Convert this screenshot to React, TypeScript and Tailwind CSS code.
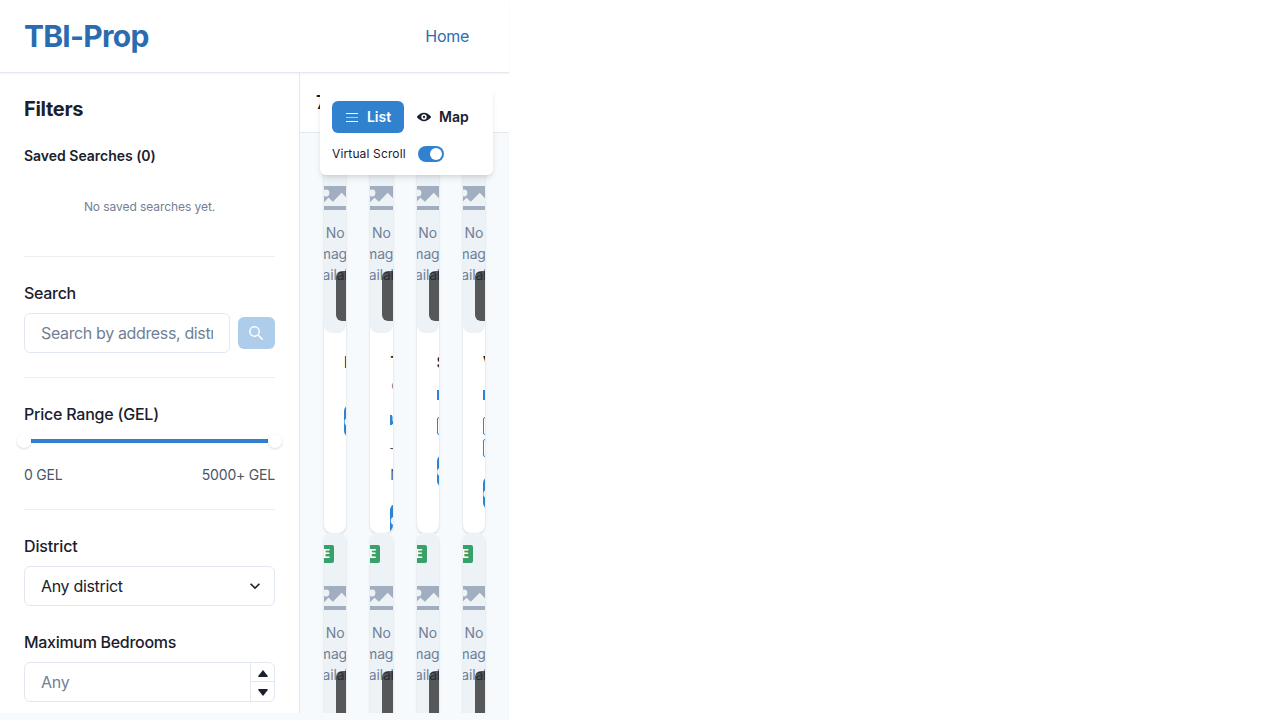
import type { ReactNode } from "react";

type Listing = { title: string; body: ReactNode };

function DetailsButton({ className }: { className: string }) {
  return (
    <button className={`block h-8 w-28 shrink-0 rounded-md bg-[#3182ce] text-left text-sm font-semibold text-white ${className}`}>
      e Details
    </button>
  );
}

function BedIcon({ className }: { className: string }) {
  return (
    <svg className={`block h-2.5 w-3 shrink-0 ${className}`} viewBox="0 0 12 10">
      <path fill="#3182ce" d="M0 0h2v5.5H12V9.2H2V10H0z" />
      <path fill="#8fc0ec" d="M2 1.2h9v4.4H2z" />
    </svg>
  );
}

function Tag({ className }: { className: string }) {
  return <span className={`block h-[18px] w-16 shrink-0 rounded-[2px] border border-[#3182ce] ${className}`} />;
}

const listings: Listing[] = [
  { title: "Modern", body: <DetailsButton className="mt-[31px]" /> },
  {
    title: "Two",
    body: (
      <>
        <span className="ml-px block h-[21px] text-sm leading-[21px] text-[#718096]">on map</span>
        <BedIcon className="mt-5" />
        <span className="mt-2.5 block h-[26px] text-sm leading-[26px] text-[#4a5568]">–</span>
        <span className="mt-px block h-[26px] text-sm leading-[26px] text-[#4a5568]">More</span>
        <DetailsButton className="mt-4" />
      </>
    ),
  },
  {
    title: "Studio",
    body: (
      <>
        <BedIcon className="mt-4" />
        <Tag className="mt-[17px]" />
        <DetailsButton className="mt-5" />
      </>
    ),
  },
  {
    title: "Villa",
    body: (
      <>
        <BedIcon className="mt-4" />
        <Tag className="mt-[17px]" />
        <Tag className="mt-1" />
        <DetailsButton className="mt-5" />
      </>
    ),
  },
];

function ListingCard({ listing }: { listing: Listing }) {
  return (
    <article className="h-[400px] min-w-0 overflow-hidden rounded-lg bg-white shadow-[0_1px_3px_0_rgba(0,0,0,0.1),0_1px_2px_0_rgba(0,0,0,0.06)]">
      <div className="relative flex h-[200px] flex-col items-center overflow-hidden rounded-lg bg-[#edf2f7] pt-[53px]">
        <svg className="block h-6 w-[23px] shrink-0" viewBox="0 0 23 24">
          <path fill="#a0aec0" d="M0 0h23v12.2l-5.3-5.4-8.8 8.9-4.4-4-4.5 4.5z" />
          <circle cx="2" cy="7" r="3.4" fill="#edf2f7" />
          <path fill="#a0aec0" d="M0 20h23v4H0z" />
        </svg>
        <p className="mt-3 text-center text-sm leading-[21px] tracking-[-0.15px] text-[#718096]">No Image Available</p>
        <span className="absolute -left-[55px] top-3 flex h-[18px] w-[65px] items-center justify-end rounded-[2px] bg-[#38a169] pr-1 text-xs font-bold text-white">
          AVAILABLE
        </span>
        <span className="absolute bottom-3 left-3 h-[50px] w-16 rounded-md bg-black/64" />
      </div>
      <div className="flex w-40 flex-col p-5">
        <h3 className="h-[21px] text-base font-semibold leading-[19px] text-[#1a202c]">{listing.title}</h3>
        {listing.body}
      </div>
    </article>
  );
}

function Divider({ className }: { className: string }) {
  return <hr className={`border-0 border-t border-[#edeef0] ${className}`} />;
}

function Sidebar() {
  return (
    <aside className="h-full w-[300px] shrink-0 overflow-hidden border-r border-[#e2e8f0] bg-white px-6 pt-6">
      <h2 className="h-6 text-xl font-bold leading-6 tracking-[-0.3px]">Filters</h2>
      <h3 className="mt-6 text-sm font-semibold leading-[21px] tracking-[-0.02px]">Saved Searches (0)</h3>
      <p className="mt-8 text-center text-xs leading-[18px] tracking-[-0.07px] text-[#718096]">No saved searches yet.</p>
      <Divider className="mt-[40px]" />

      <label className="mt-6 block h-6 text-base font-medium leading-6 tracking-[-0.3px]">Search</label>
      <div className="mt-2 flex items-center gap-2">
        <div className="h-10 w-[206px] rounded-md border border-[#e2e8f0] px-4">
          <div className="overflow-hidden whitespace-nowrap leading-[38px] tracking-[-0.36px] text-[#718096]">Search by address, district</div>
        </div>
        <button className="flex h-8 flex-1 items-center justify-center rounded-md bg-[#3182ce]/40 text-white">
          <svg className="mr-px h-3.5 w-3.5" viewBox="0 0 24 24" fill="currentColor">
            <path d="M23.384,21.619,16.855,15.09a9.284,9.284,0,1,0-1.768,1.768l6.529,6.529a1.266,1.266,0,0,0,1.768,0A1.251,1.251,0,0,0,23.384,21.619ZM2.75,9.5a6.75,6.75,0,1,1,6.75,6.75A6.758,6.758,0,0,1,2.75,9.5Z" />
          </svg>
        </button>
      </div>
      <Divider className="mt-6" />

      <label className="mt-6 block h-6 font-medium leading-6 tracking-[-0.22px]">Price Range (GEL)</label>
      <div className="-mx-[7px] mt-2 flex h-3.5 items-center">
        <span className="z-10 h-3.5 w-3.5 rounded-full bg-white shadow-[0_1px_3px_0_rgba(0,0,0,0.1),0_1px_2px_0_rgba(0,0,0,0.06)]" />
        <span className="h-1 flex-1 bg-[#3182ce]" />
        <span className="z-10 h-3.5 w-3.5 rounded-full bg-white shadow-[0_1px_3px_0_rgba(0,0,0,0.1),0_1px_2px_0_rgba(0,0,0,0.06)]" />
      </div>
      <div className="mt-4 flex justify-between text-sm leading-[21px] tracking-[-0.2px] text-[#4a5568]">
        <span>0 GEL</span>
        <span>5000+ GEL</span>
      </div>
      <Divider className="mt-6" />

      <label className="mt-6 block h-6 font-medium leading-6 tracking-[-0.15px]">District</label>
      <div className="mt-2 flex h-10 items-center justify-between rounded-md border border-[#e2e8f0] pl-4 pr-[9px]">
        <span className="tracking-[-0.33px]">Any district</span>
        <svg className="h-5 w-5" viewBox="0 0 24 24" fill="currentColor">
          <path d="M16.59 8.59L12 13.17 7.41 8.59 6 10l6 6 6-6z" />
        </svg>
      </div>

      <label className="mt-6 block h-6 font-medium leading-6 tracking-[-0.3px]">Maximum Bedrooms</label>
      <div className="mt-2 flex h-10 rounded-md border border-[#e2e8f0]">
        <span className="flex-1 pl-4 leading-[38px] tracking-[-0.3px] text-[#718096]">Any</span>
        <div className="flex w-6 flex-col border-l border-[#e2e8f0]">
          <span className="flex h-[19px] items-center justify-center border-b border-[#e2e8f0]">
            <svg className="mt-0.5 h-[7px] w-2.5" viewBox="0 0 10 7" fill="currentColor">
              <path d="M5 0L9.8 6Q10 7 9 7H1Q0 7 .2 6z" />
            </svg>
          </span>
          <span className="flex h-[19px] items-center justify-center">
            <svg className="mt-px h-[7px] w-2.5" viewBox="0 0 10 7" fill="currentColor">
              <path d="M5 7L9.8 1Q10 0 9 0H1Q0 0 .2 1z" />
            </svg>
          </span>
        </div>
      </div>
    </aside>
  );
}

function ViewPanel() {
  return (
    <div className="absolute right-4 top-4 z-20 h-[86px] w-[173px] rounded-md bg-white p-3 shadow-[0_4px_6px_-1px_rgba(0,0,0,0.1),0_2px_4px_-1px_rgba(0,0,0,0.06)]">
      <div className="flex text-sm font-semibold">
        <button className="flex h-8 w-[72px] items-center justify-center gap-2 rounded-md bg-[#3182ce] text-white">
          <svg className="h-3.5 w-3.5" viewBox="0 0 14 14" stroke="currentColor" strokeWidth="1">
            <path d="M1 3.5h12M1 11.5h12" />
            <path d="M1 7.5h12" strokeOpacity="0.6" />
          </svg>
          List
        </button>
        <button className="flex h-8 items-center gap-2 px-3">
          <svg className="ml-px h-3.5 w-3.5" viewBox="0 0 24 24" fill="currentColor">
            <path d="M23.432,10.524C20.787,7.614,16.4,4.538,12,4.6,7.6,4.537,3.213,7.615.568,10.524a2.211,2.211,0,0,0,0,2.948C3.182,16.351,7.507,19.4,11.839,19.4h.308c4.347,0,8.671-3.049,11.288-5.929A2.21,2.21,0,0,0,23.432,10.524ZM7.4,12A4.6,4.6,0,1,1,12,16.6,4.6,4.6,0,0,1,7.4,12Z" />
            <circle cx="12" cy="12" r="2" />
          </svg>
          Map
        </button>
      </div>
      <div className="mt-3 flex h-[18px] items-center gap-3">
        <span className="w-[74px] whitespace-nowrap text-xs tracking-[0.14px]">Virtual Scroll</span>
        <span className="flex h-4 w-[26px] shrink-0 justify-end rounded-full bg-[#3182ce] p-0.5">
          <span className="h-3 w-3 rounded-full bg-white" />
        </span>
      </div>
    </div>
  );
}

export default function App() {
  return (
    <div className="h-[720px] overflow-hidden bg-white font-['Inter',sans-serif] text-base text-[#1a202c]">
      <div className="flex h-full w-[509px] flex-col bg-[#f7fafc]">
        <header className="relative z-10 flex h-[73px] shrink-0 items-center justify-between border-b border-[#e2e8f0] bg-white pl-6 pr-10 shadow-[0_1px_2px_0_rgba(0,0,0,0.05)]">
          <span className="text-3xl font-bold tracking-[-0.75px] text-[#2b6cb0]">TBI-Prop</span>
          <a className="text-base tracking-[-0.3px] text-[#2b6cb0]">Home</a>
        </header>
        <div className="flex h-[640px] shrink-0">
          <Sidebar />
          <main className="relative flex min-w-0 flex-1 flex-col overflow-hidden">
            <div className="h-[60px] shrink-0 overflow-hidden whitespace-nowrap border-b border-[#e2e8f0] bg-white px-4 text-lg font-semibold leading-[59px]">
              7 Properties
            </div>
            <ViewPanel />
            <div className="grid shrink-0 grid-cols-4 gap-x-6 px-6">
              {listings.map((listing) => (
                <ListingCard key={listing.title} listing={listing} />
              ))}
              {listings.map((listing) => (
                <ListingCard key={`${listing.title}-next`} listing={listing} />
              ))}
            </div>
          </main>
        </div>
      </div>
    </div>
  );
}
